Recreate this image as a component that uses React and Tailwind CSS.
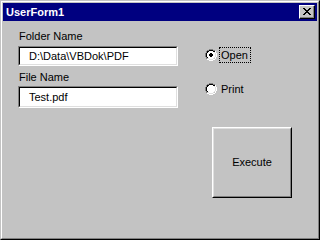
import React from 'react';

const font = { fontFamily: '"Liberation Sans", Arial, sans-serif' };

const Radio = ({ checked }) => (
    <svg width="12" height="12" viewBox="0 0 12 12" shapeRendering="crispEdges">
        {/* outer ring: dark top-left, white bottom-right */}
        <path d="M4 0h4v1h2v1h-2v-1h-4v1h-2v2h-1v4h1v2h-1v-2h-1v-4h1v-2h1v-1h2z" fill="#808080" />
        <path d="M4 1h4v1h-4zM2 2h2v1h-2zM8 2h2v1h-2zM1 4h1v4h-1zM2 3h1v1h-1zM2 8h1v1h-1z" fill="#000" />
        <path d="M10 2h1v2h-1zM11 4h1v4h-1zM10 8h1v2h-1zM8 10h2v1h-2zM4 11h4v1h-4zM2 10h2v1h-2z" fill="#fff" />
        <path d="M9 3h1v1h-1zM10 4h1v4h-1zM9 8h1v1h-1zM8 9h1v1h-1zM4 10h4v1h-4zM3 9h1v1h-1z" fill="#dfdfdf" />
        <path d="M4 2h4v1h1v1h1v4h-1v1h-1v1h-4v-1h-1v-1h-1v-4h1v-1h1z" fill="#fff" />
        {checked && <path d="M5 4h2v1h1v2h-1v1h-2v-1h-1v-2h1z" fill="#000" />}
    </svg>
);

const TextBox = ({ value, h }) => (
    <div className={`w-[160px] ${h} border-t border-l border-t-[#808080] border-l-[#808080] border-b border-r border-b-white border-r-white`}>
        <div className="h-full border-t border-l border-t-black border-l-black border-b border-r border-b-[#dfdfdf] border-r-[#dfdfdf] bg-white flex items-center pl-[9px] text-[11px] text-black">
            {value}
        </div>
    </div>
);

export default function App() {
    return (
        <div className="w-[320px] h-[240px] bg-[#c3c3c3]" style={font}>
            <div className="w-full h-full border-t border-l border-t-[#c3c3c3] border-l-[#c3c3c3] border-b border-r border-b-black border-r-black">
                <div className="w-full h-full border-t border-l border-t-white border-l-white border-b border-r border-b-[#808080] border-r-[#808080] p-[1px] flex flex-col">
                    {/* Title bar */}
                    <div className="h-[18px] bg-[#000080] flex items-center justify-between pl-[3px] pr-[2px]">
                        <span className="text-white font-bold text-[11px] leading-[18px]">UserForm1</span>
                        <div className="w-[16px] h-[14px] bg-[#c3c3c3] border-t border-l border-t-white border-l-white border-b border-r border-b-black border-r-black">
                            <div className="w-full h-full border-b border-r border-b-[#808080] border-r-[#808080] flex items-center justify-center">
                                <svg width="8" height="7" viewBox="0 0 8 7" shapeRendering="crispEdges">
                                    <path d="M0 0h2v1h1v1h2v-1h1v-1h2v1h-1v1h-1v1h-1v1h1v1h1v1h1v1h-2v-1h-1v-1h-2v1h-1v1h-2v-1h1v-1h1v-1h1v-1h-1v-1h-1v-1h-1z" fill="#000" />
                                </svg>
                            </div>
                        </div>
                    </div>

                    {/* Body */}
                    <div className="flex-1 flex items-start pl-[15px] text-[11px] text-black">
                        <div className="flex flex-col pt-[9px]">
                            <div className="leading-[13px] pl-[1px]">Folder Name</div>
                            <div className="mt-[3px]">
                                <TextBox value="D:\Data\VBDok\PDF" h="h-[20px]" />
                            </div>
                            <div className="leading-[13px] pl-[1px] mt-[5px]">File Name</div>
                            <div className="mt-[2px]">
                                <TextBox value="Test.pdf" h="h-[22px]" />
                            </div>
                        </div>

                        <div className="flex flex-col pt-[26px] ml-[27px]">
                            <div className="flex items-center h-[16px]">
                                <Radio checked />
                                <span className="ml-[2px] h-[16px] border border-dotted border-black pl-[1px] pr-[2px] leading-[14px]">Open</span>
                            </div>
                            <div className="flex items-center h-[16px] mt-[18px]">
                                <Radio />
                                <span className="ml-[2px] h-[16px] border border-transparent pl-[1px] pr-[2px] leading-[14px]">Print</span>
                            </div>
                            <div className="mt-[30px] ml-[7px] w-[80px] h-[71px] border-t border-l border-t-white border-l-white border-b border-r border-b-black border-r-black">
                                <div className="w-full h-full border-t border-l border-t-[#dfdfdf] border-l-[#dfdfdf] border-b border-r border-b-[#808080] border-r-[#808080] flex items-center justify-center">
                                    Execute
                                </div>
                            </div>
                        </div>
                    </div>
                </div>
            </div>
        </div>
    );
}
